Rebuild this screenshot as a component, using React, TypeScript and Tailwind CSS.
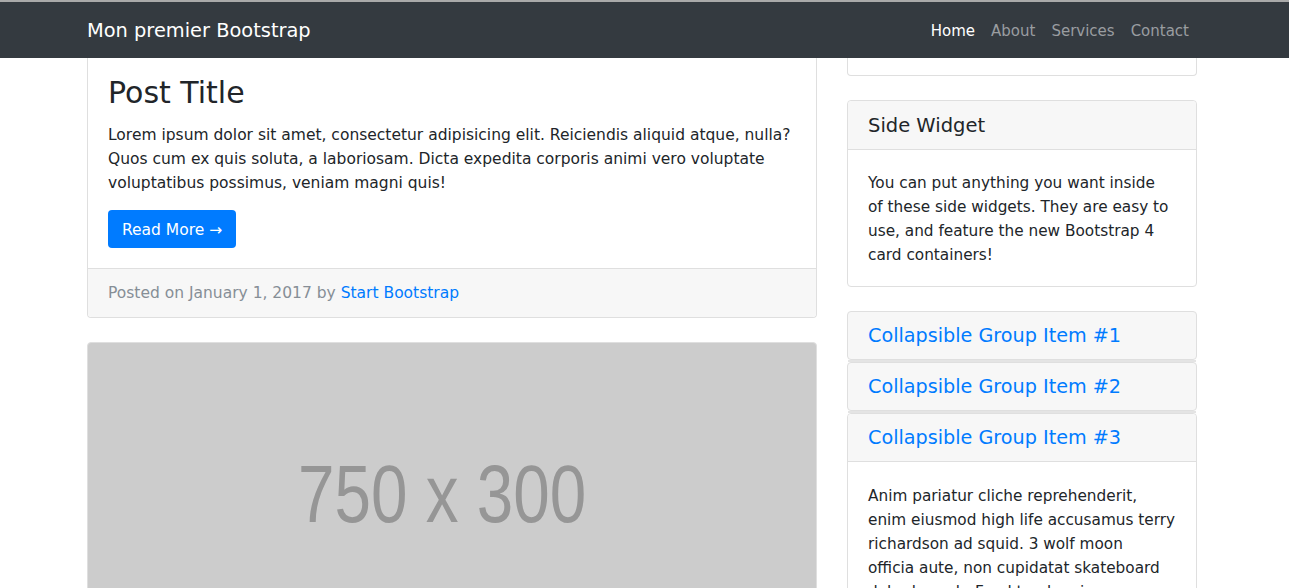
import React from "react";

const font = { fontFamily: '"DejaVu Sans", "Open Sans", sans-serif' };

const navLinks = [
  { label: "Home", active: true },
  { label: "About", active: false },
  { label: "Services", active: false },
  { label: "Contact", active: false },
];

const postLines = [
  "Lorem ipsum dolor sit amet, consectetur adipisicing elit. Reiciendis aliquid atque, nulla?",
  "Quos cum ex quis soluta, a laboriosam. Dicta expedita corporis animi vero voluptate",
  "voluptatibus possimus, veniam magni quis!",
];

const widgetLines = [
  "You can put anything you want inside",
  "of these side widgets. They are easy to",
  "use, and feature the new Bootstrap 4",
  "card containers!",
];

const collapseLines = [
  "Anim pariatur cliche reprehenderit,",
  "enim eiusmod high life accusamus terry",
  "richardson ad squid. 3 wolf moon",
  "officia aute, non cupidatat skateboard",
  "dolor brunch. Food truck quinoa",
];

const Navbar: React.FC = () => (
  <div className="border-t-2 border-[#a9a9a9] bg-[#343a40]">
    <div className="ml-[87px] w-[1110px] h-[56px] pt-[2px] flex items-center justify-between">
      <span className="text-[19.4px] text-white">Mon premier Bootstrap</span>
      <ul className="flex items-center">
        {navLinks.map((link) => (
          <li
            key={link.label}
            className={`px-2 text-[15px] ${
              link.active ? "text-white" : "text-[#9a9da0]"
            }`}
          >
            {link.label}
          </li>
        ))}
      </ul>
    </div>
  </div>
);

const App: React.FC = () => {
  return (
    <div className="h-[588px] overflow-hidden bg-white text-[#212529]" style={font}>
      <Navbar />

      <div className="ml-[87px] w-[1110px] flex gap-[30px] items-start">
        {/* Blog posts */}
        <div className="w-[730px] flex flex-col gap-6">
          <div className="border border-t-0 border-[#dfdfdf] rounded-b">
            <div className="px-5 pt-[16px] pb-5">
              <h2 className="text-[30px] leading-[38px] mb-[11px]">Post Title</h2>
              <p className="text-[15.5px] leading-6 mb-[15px]">
                {postLines.map((line) => (
                  <span key={line} className="block whitespace-nowrap">
                    {line}
                  </span>
                ))}
              </p>
              <button className="h-[38px] px-[14px] pt-[3px] rounded bg-[#007bff] text-white text-[15.5px]">
                Read More &rarr;
              </button>
            </div>
            <div className="border-t border-[#dfdfdf] bg-[#f7f7f7] h-[49px] px-5 pt-[2px] flex items-center text-[15.5px] text-[#868e96] rounded-b">
              <span>
                Posted on January 1, 2017 by{" "}
                <span className="text-[#007bff]">Start Bootstrap</span>
              </span>
            </div>
          </div>

          <div className="border border-[#dfdfdf] rounded-t bg-[#cccccc] h-[292px] flex items-center justify-center">
            <span
              className="text-[82px] text-[#969696] scale-x-[0.8] -translate-x-[10px] translate-y-[5px]"
              style={{ fontFamily: '"Liberation Sans", Arial, sans-serif' }}
            >
              750 x 300
            </span>
          </div>
        </div>

        {/* Sidebar */}
        <div className="w-[350px] flex flex-col">
          <div className="h-[18px] border border-t-0 border-[#dfdfdf] rounded-b mb-6"></div>

          <div className="border border-[#dfdfdf] rounded mb-6">
            <div className="h-[49px] px-5 pt-[2px] flex items-center bg-[#f7f7f7] border-b border-[#dfdfdf] text-[19.5px] rounded-t">
              Side Widget
            </div>
            <div className="px-5 pt-[21px] pb-[19px] text-[15.3px] leading-6">
              {widgetLines.map((line) => (
                <span key={line} className="block whitespace-nowrap">
                  {line}
                </span>
              ))}
            </div>
          </div>

          <div className="flex flex-col">
            {[1, 2].map((n) => (
              <React.Fragment key={n}>
                <div className="h-[49px] px-5 pt-[2px] flex items-center bg-[#f7f7f7] border border-[#dfdfdf] rounded text-[19.2px] text-[#007bff]">
                  Collapsible Group Item #{n}
                </div>
                <div className="h-[2px] mx-[1px] bg-[#e4e4e4]"></div>
              </React.Fragment>
            ))}
            <div className="border border-[#dfdfdf] rounded">
              <div className="h-[48px] px-5 pt-[2px] flex items-center bg-[#f7f7f7] border-b border-[#dfdfdf] rounded-t text-[19.2px] text-[#007bff]">
                Collapsible Group Item #3
              </div>
              <div className="px-5 pt-[22px] pb-5 text-[15.3px] leading-6">
                {collapseLines.map((line) => (
                  <span key={line} className="block whitespace-nowrap">
                    {line}
                  </span>
                ))}
              </div>
            </div>
          </div>
        </div>
      </div>
    </div>
  );
};

export default App;
